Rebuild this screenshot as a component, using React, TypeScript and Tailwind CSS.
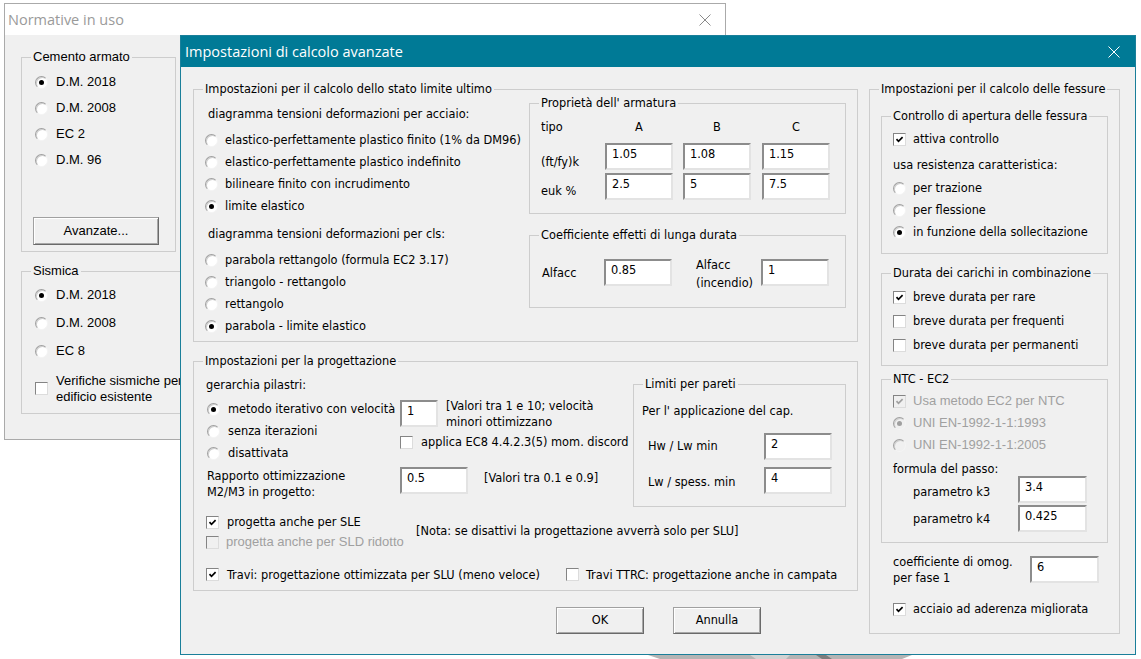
import React from "react";

const DLG = "font-['DejaVu_Sans_Condensed','DejaVu_Sans',sans-serif] text-[12.65px] text-black";
const MSS = "font-['Liberation_Sans',Arial,sans-serif] text-[13px]";
const TITLE = "font-['Open_Sans',sans-serif] text-[14.5px]";

function Group({
  label,
  className = "",
  children,
}: {
  label: string;
  className?: string;
  children?: React.ReactNode;
}) {
  return (
    <div className={`relative shrink-0 border border-[#cdcdcd] ${className}`}>
      <span className="absolute -top-[9px] left-[9px] whitespace-nowrap bg-[#f0f0f0] px-[2px] leading-[16px]">
        {label}
      </span>
      {children}
    </div>
  );
}

function Radio({ on, dim }: { on?: boolean; dim?: boolean }) {
  return (
    <span
      className={`flex h-[13px] w-[13px] shrink-0 items-center justify-center rounded-full border border-t-[#a0a0a0] border-l-[#a0a0a0] border-r-[#f4f4f4] border-b-[#f4f4f4] shadow-[inset_1px_1px_0_#cfcfcf] ${
        dim ? "bg-[#f0f0f0]" : "bg-white"
      }`}
    >
      {on && <span className={`h-[5px] w-[5px] rounded-full ${dim ? "bg-[#a0a0a0]" : "bg-black"}`} />}
    </span>
  );
}

function Check({ on, dim }: { on?: boolean; dim?: boolean }) {
  return (
    <span
      className={`flex h-[13px] w-[13px] shrink-0 items-center justify-center border border-t-[#848484] border-l-[#848484] border-r-[#dcdcdc] border-b-[#dcdcdc] ${
        dim ? "bg-[#f0f0f0]" : "bg-white"
      }`}
    >
      {on && (
        <svg width="9" height="9" viewBox="0 0 9 9">
          <path d="M1.5 4.2 L3.5 6.3 L7.6 2.2" fill="none" stroke={dim ? "#a0a0a0" : "#000"} strokeWidth="1.7" />
        </svg>
      )}
    </span>
  );
}

function Field({ value, className = "" }: { value: string; className?: string }) {
  return (
    <div
      className={`h-[27px] shrink-0 border-2 border-t-[#8c8c8c] border-l-[#8c8c8c] border-r-[#e3e3e3] border-b-[#e3e3e3] bg-white pl-[5px] pt-[1px] leading-[16px] ${className}`}
    >
      {value}
    </div>
  );
}

function Btn({ children, className = "" }: { children: React.ReactNode; className?: string }) {
  return (
    <div
      className={`flex shrink-0 items-center justify-center border border-[#a0a0a0] border-r-[#6a6a6a] border-b-[#6a6a6a] bg-[#f0f0f0] shadow-[inset_1px_1px_0_#ffffff,inset_-1px_-1px_0_#a8a8a8] ${className}`}
    >
      {children}
    </div>
  );
}

function XIcon({ color }: { color: string }) {
  return (
    <svg width="12" height="12" viewBox="0 0 12 12">
      <path d="M0.5 0.5 L11.5 11.5 M11.5 0.5 L0.5 11.5" stroke={color} strokeWidth="1" />
    </svg>
  );
}

function RadioRow({ label, on, h = "h-[22px]", gap = "gap-[7px]" }: { label: string; on?: boolean; h?: string; gap?: string }) {
  return (
    <div className={`flex items-center ${h} ${gap}`}>
      <Radio on={on} />
      <span className="whitespace-nowrap">{label}</span>
    </div>
  );
}

export default function App() {
  return (
    <div className="relative h-[659px] w-[1141px] overflow-hidden bg-white">
      {/* desktop background scrap */}
      <svg className="absolute left-[640px] top-[655px]" width="280" height="4" viewBox="0 0 280 4">
        <polygon points="8,0 272,0 262,4 20,4" fill="#b4b4b4" />
        <polygon points="110,0 150,0 146,4 116,4" fill="#d2d2d2" />
        <polygon points="176,0 186,0 192,4 182,4" fill="#7c7c7c" />
      </svg>

      {/* Normative in uso (background window) */}
      <div className={`absolute left-[4px] top-[3px] flex h-[437px] w-[722px] flex-col border border-[#aaaaaa] bg-[#f0f0f0] text-black ${MSS}`}>
        <div className="flex h-[31px] shrink-0 items-center justify-between bg-white pl-[3px] pr-[14px]">
          <span className={`${TITLE} text-[#9a9a9a]`}>Normative in uso</span>
          <XIcon color="#8a8a8a" />
        </div>
        <div className="flex flex-col pl-[16px] pt-[22px]">
          <Group label="Cemento armato" className="h-[195px] w-[155px]">
            <div className="flex flex-col pt-[11px]">
              <div className="pl-[13px]">
                <RadioRow label="D.M. 2018" on h="h-[26px]" gap="gap-[8px]" />
                <RadioRow label="D.M. 2008" h="h-[26px]" gap="gap-[8px]" />
                <RadioRow label="EC 2" h="h-[26px]" gap="gap-[8px]" />
                <RadioRow label="D.M. 96" h="h-[26px]" gap="gap-[8px]" />
              </div>
              <Btn className="ml-[11px] mt-[44px] h-[28px] w-[126px]">Avanzate...</Btn>
            </div>
          </Group>
          <Group label="Sismica" className="mt-[19px] h-[143px] w-[690px]">
            <div className="flex flex-col pt-[9px]">
              <div className="pl-[13px]">
                <RadioRow label="D.M. 2018" on h="h-[28px]" gap="gap-[8px]" />
                <RadioRow label="D.M. 2008" h="h-[28px]" gap="gap-[8px]" />
                <RadioRow label="EC 8" h="h-[28px]" gap="gap-[8px]" />
              </div>
              <div className="mt-[8px] flex items-start gap-[8px] pl-[13px]">
                <div className="mt-[9px]">
                  <Check />
                </div>
                <div className="leading-[16px]">
                  Verifiche sismiche per
                  <br />
                  edificio esistente
                </div>
              </div>
            </div>
          </Group>
        </div>
      </div>

      {/* Impostazioni di calcolo avanzate (dialog) */}
      <div className={`absolute left-[180px] top-[35px] flex h-[620px] w-[956px] flex-col border border-[#1a7f9a] bg-[#f0f0f0] ${DLG}`}>
        <div className="flex h-[31px] shrink-0 items-center justify-between bg-[#007a96] pl-[4px] pr-[15px] text-white">
          <span className={TITLE}>Impostazioni di calcolo avanzate</span>
          <XIcon color="#ffffff" />
        </div>

        <div className="flex gap-[11px] pl-[12px] pt-[22px]">
          {/* left column */}
          <div className="flex w-[665px] shrink-0 flex-col">
            <Group label="Impostazioni per il calcolo dello stato limite ultimo" className="h-[253px]">
              <div className="flex pt-[13px]">
                <div className="flex-1 pl-[11px]">
                  <div className="ml-[3px] h-[22px] leading-[22px]">diagramma tensioni deformazioni per acciaio:</div>
                  <div className="mt-[4px]">
                    <RadioRow label="elastico-perfettamente plastico finito (1% da DM96)" />
                    <RadioRow label="elastico-perfettamente plastico indefinito" />
                    <RadioRow label="bilineare finito con incrudimento" />
                    <RadioRow label="limite elastico" on />
                  </div>
                  <div className="ml-[3px] mt-[6px] h-[22px] leading-[22px]">diagramma tensioni deformazioni per cls:</div>
                  <div className="mt-[4px]">
                    <RadioRow label="parabola rettangolo (formula EC2 3.17)" />
                    <RadioRow label="triangolo - rettangolo" />
                    <RadioRow label="rettangolo" />
                    <RadioRow label="parabola - limite elastico" on />
                  </div>
                </div>

                <div className="mr-[11px] w-[317px] shrink-0">
                  <Group label="Proprietà dell' armatura" className="h-[111px]">
                    <div className="pl-[11px] pt-[15px]">
                      <div className="flex leading-[16px]">
                        <div className="w-[64px]">tipo</div>
                        <div className="w-[68px] text-center">A</div>
                        <div className="ml-[10px] w-[68px] text-center">B</div>
                        <div className="ml-[11px] w-[68px] text-center">C</div>
                      </div>
                      <div className="mt-[8px] flex">
                        <div className="w-[64px] pt-[11px] leading-[16px]">(ft/fy)k</div>
                        <Field value="1.05" className="w-[68px]" />
                        <Field value="1.08" className="ml-[10px] w-[68px]" />
                        <Field value="1.15" className="ml-[11px] w-[68px]" />
                      </div>
                      <div className="mt-[3px] flex">
                        <div className="w-[64px] pt-[10px] leading-[16px]">euk %</div>
                        <Field value="2.5" className="w-[68px]" />
                        <Field value="5" className="ml-[10px] w-[68px]" />
                        <Field value="7.5" className="ml-[11px] w-[68px]" />
                      </div>
                    </div>
                  </Group>
                  <Group label="Coefficiente effetti di lunga durata" className="mt-[21px] h-[73px]">
                    <div className="flex pl-[12px] pt-[23px]">
                      <div className="w-[62px] pt-[6px] leading-[16px]">Alfacc</div>
                      <Field value="0.85" className="w-[68px]" />
                      <div className="-mt-[3px] ml-[24px] w-[65px] leading-[18px]">
                        Alfacc
                        <br />
                        (incendio)
                      </div>
                      <Field value="1" className="w-[68px]" />
                    </div>
                  </Group>
                </div>
              </div>
            </Group>

            <Group label="Impostazioni per la progettazione" className="mt-[19px] h-[230px]">
              <div className="flex">
                <div className="w-[439px] shrink-0 overflow-hidden">
                  <div className="ml-[12px] mt-[12px] h-[22px] leading-[22px]">gerarchia pilastri:</div>
                  <div className="mt-[2px] flex">
                    <div className="w-[206px] shrink-0 pl-[13px]">
                      <RadioRow label="metodo iterativo con velocità" on gap="gap-[8px]" />
                      <RadioRow label="senza iterazioni" gap="gap-[8px]" />
                      <RadioRow label="disattivata" gap="gap-[8px]" />
                    </div>
                    <div className="flex flex-col">
                      <div className="flex">
                        <Field value="1" className="mt-[2px] w-[38px]" />
                        <div className="ml-[8px] whitespace-nowrap leading-[16px]">
                          [Valori tra 1 e 10; velocità
                          <br />
                          minori ottimizzano
                        </div>
                      </div>
                      <div className="mt-[3px] flex items-center gap-[8px] whitespace-nowrap">
                        <Check />
                        <span>applica EC8 4.4.2.3(5) mom. discord</span>
                      </div>
                    </div>
                  </div>
                  <div className="mt-[3px] flex">
                    <div className="w-[206px] shrink-0 pl-[13px] pt-[1px] leading-[16px]">
                      Rapporto ottimizzazione
                      <br />
                      M2/M3 in progetto:
                    </div>
                    <Field value="0.5" className="w-[68px]" />
                    <div className="ml-[16px] mt-[3px] whitespace-nowrap leading-[16px]">[Valori tra 0.1 e 0.9]</div>
                  </div>
                </div>

                <Group label="Limiti per pareti" className="mt-[22px] h-[123px] w-[213px]">
                  <div className="pl-[8px] pt-[18px] leading-[16px]">Per l' applicazione del cap.</div>
                  <div className="mt-[14px] flex pl-[14px]">
                    <div className="w-[116px] pt-[5px] leading-[16px]">Hw / Lw min</div>
                    <Field value="2" className="w-[68px]" />
                  </div>
                  <div className="mt-[7px] flex pl-[14px]">
                    <div className="w-[116px] pt-[7px] leading-[16px]">Lw / spess. min</div>
                    <Field value="4" className="w-[68px]" />
                  </div>
                </Group>
              </div>

              <div className="mt-[5px] flex">
                <div className="w-[222px] shrink-0 pl-[12px]">
                  <div className="flex h-[20px] items-center gap-[8px]">
                    <Check on />
                    <span>progetta anche per SLE</span>
                  </div>
                  <div className="flex h-[20px] items-center gap-[7px]">
                    <Check dim />
                    <span className={`${MSS} whitespace-nowrap text-[#a0a0a0]`}>progetta anche per SLD ridotto</span>
                  </div>
                </div>
                <div className="mt-[11px] whitespace-nowrap leading-[16px]">
                  [Nota: se disattivi la progettazione avverrà solo per SLU]
                </div>
              </div>
              <div className="mt-[13px] flex h-[20px] items-center">
                <div className="flex w-[372px] shrink-0 items-center gap-[8px] pl-[12px] whitespace-nowrap">
                  <Check on />
                  <span>Travi: progettazione ottimizzata per SLU (meno veloce)</span>
                </div>
                <div className="flex items-center gap-[7px] whitespace-nowrap">
                  <Check />
                  <span>Travi TTRC: progettazione anche in campata</span>
                </div>
              </div>
            </Group>

            <div className="mt-[16px] flex pl-[363px]">
              <Btn className="h-[27px] w-[88px]">OK</Btn>
              <Btn className="ml-[29px] h-[27px] w-[88px]">Annulla</Btn>
            </div>
          </div>

          {/* right column */}
          <Group label="Impostazioni per il calcolo delle fessure" className="h-[545px] w-[251px]">
            <div className="flex flex-col px-[11px] pt-[26px]">
              <Group label="Controllo di apertura delle fessura" className="h-[138px]">
                <div className="pl-[11px] pt-[12px]">
                  <div className="flex h-[20px] items-center gap-[7px]">
                    <Check on />
                    <span>attiva controllo</span>
                  </div>
                  <div className="mt-[6px] h-[20px] leading-[20px]">usa resistenza caratteristica:</div>
                  <div className="mt-[2px]">
                    <RadioRow label="per trazione" />
                    <RadioRow label="per flessione" />
                    <RadioRow label="in funzione della sollecitazione" on />
                  </div>
                </div>
              </Group>

              <Group label="Durata dei carichi in combinazione" className="mt-[19px] h-[93px]">
                <div className="pl-[11px] pt-[11px]">
                  <div className="flex h-[24px] items-center gap-[7px]">
                    <Check on />
                    <span>breve durata per rare</span>
                  </div>
                  <div className="flex h-[24px] items-center gap-[7px]">
                    <Check />
                    <span>breve durata per frequenti</span>
                  </div>
                  <div className="flex h-[24px] items-center gap-[7px]">
                    <Check />
                    <span>breve durata per permanenti</span>
                  </div>
                </div>
              </Group>

              <Group label="NTC - EC2" className="mt-[13px] h-[164px]">
                <div className="pl-[11px] pt-[10px]">
                  <div className="flex h-[22px] items-center gap-[7px]">
                    <Check on dim />
                    <span className={`${MSS} text-[#a0a0a0]`}>Usa metodo EC2 per NTC</span>
                  </div>
                  <div className="flex h-[22px] items-center gap-[7px]">
                    <Radio on dim />
                    <span className={`${MSS} text-[#a0a0a0]`}>UNI EN-1992-1-1:1993</span>
                  </div>
                  <div className="flex h-[22px] items-center gap-[7px]">
                    <Radio dim />
                    <span className={`${MSS} text-[#a0a0a0]`}>UNI EN-1992-1-1:2005</span>
                  </div>
                  <div className="mt-[6px] h-[14px] leading-[14px]">formula del passo:</div>
                  <div className="flex">
                    <div className="w-[125px] pl-[20px] pt-[8px] leading-[16px]">parametro k3</div>
                    <Field value="3.4" className="w-[69px]" />
                  </div>
                  <div className="mt-[2px] flex">
                    <div className="w-[125px] pl-[20px] pt-[6px] leading-[16px]">parametro k4</div>
                    <Field value="0.425" className="w-[69px]" />
                  </div>
                </div>
              </Group>

              <div className="mt-[11px] flex pl-[12px]">
                <div className="w-[137px] leading-[16px]">
                  coefficiente di omog.
                  <br />
                  per fase 1
                </div>
                <Field value="6" className="mt-[2px] w-[69px]" />
              </div>
              <div className="mt-[13px] flex h-[20px] items-center gap-[7px] pl-[12px]">
                <Check on />
                <span>acciaio ad aderenza migliorata</span>
              </div>
            </div>
          </Group>
        </div>
      </div>
    </div>
  );
}
